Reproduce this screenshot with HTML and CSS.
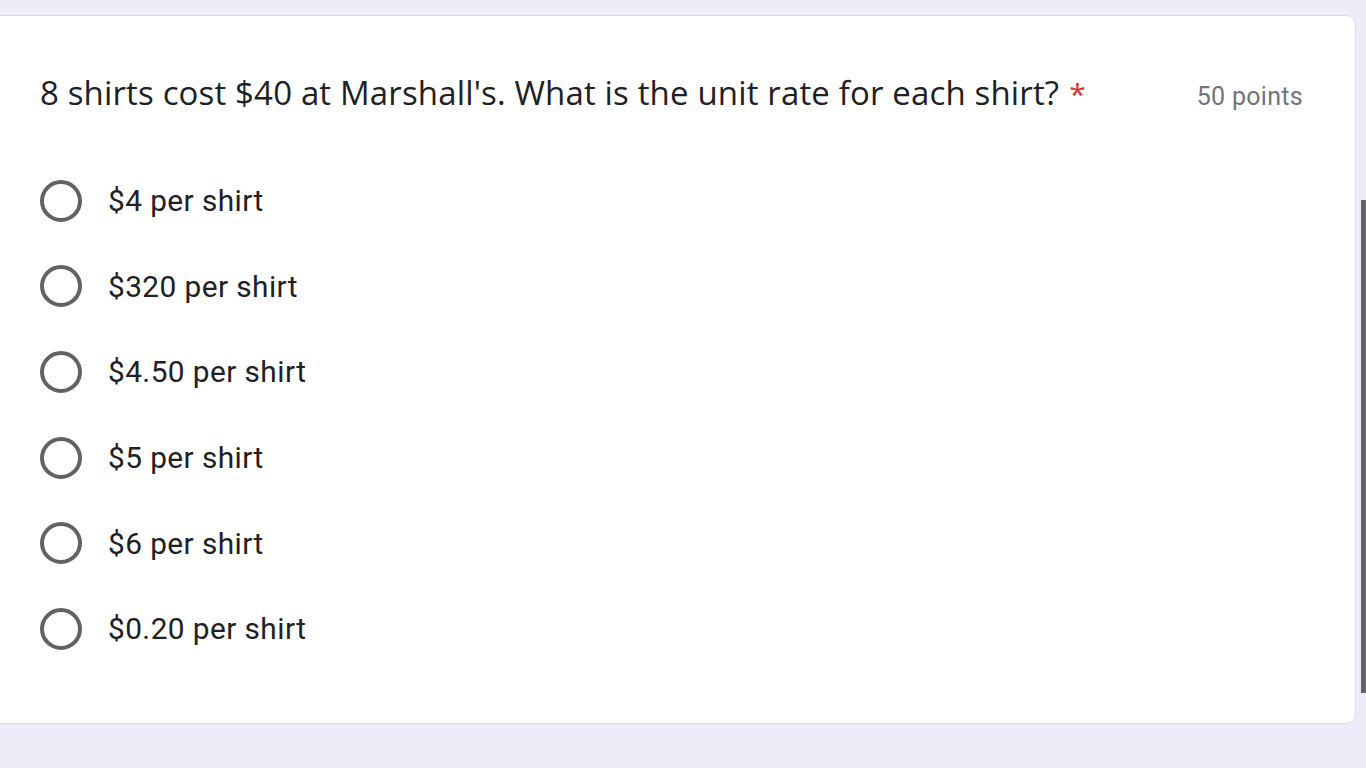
FILE: index.html
```html
<!DOCTYPE html>
<html>
<head>
<meta charset="utf-8">
<link rel="stylesheet" href="styles.css">
</head>
<body>
<div class="page">
  <div class="card">
    <div class="head">
      <div class="question">8 shirts cost $40 at Marshall's. What is the unit rate for each shirt?<span class="req">*</span></div>
      <div class="points">50 points</div>
    </div>
    <div class="options">
      <div class="option"><span class="radio"></span><span class="label">$4 per shirt</span></div>
      <div class="option"><span class="radio"></span><span class="label">$320 per shirt</span></div>
      <div class="option"><span class="radio"></span><span class="label">$4.50 per shirt</span></div>
      <div class="option"><span class="radio"></span><span class="label">$5 per shirt</span></div>
      <div class="option"><span class="radio"></span><span class="label">$6 per shirt</span></div>
      <div class="option"><span class="radio"></span><span class="label">$0.20 per shirt</span></div>
    </div>
  </div>
</div>
<div class="scrollbar"></div>
</body>
</html>
```
FILE: styles.css
```css
html, body {
  margin: 0;
  padding: 0;
  background: #f0ebf8;
  height: 768px;
  overflow: hidden;
}
.page {
  padding-top: 15px;
}
.card {
  margin: 0 10px 0 -10px;
  height: 709px;
  background: #ffffff;
  border: 1px solid #dadce0;
  border-radius: 10px;
  padding: 0 52px 0 49px;
  box-sizing: border-box;
}
.head {
  display: flex;
  justify-content: space-between;
  align-items: baseline;
  padding-top: 55px;
}
.question {
  font-family: "Open Sans", "Noto Sans", sans-serif;
  font-size: 33px;
  letter-spacing: 0.15px;
  color: #202124;
  line-height: 44px;
}
.req {
  color: #d93025;
  margin-left: 10px;
  font-size: 30px;
}
.points {
  font-family: Roboto, "Liberation Sans", sans-serif;
  font-size: 25px;
  letter-spacing: 0.3px;
  color: #70757a;
}
.options {
  padding-top: 42px;
}
.option {
  display: flex;
  align-items: center;
  height: 85.6px;
}
.radio {
  width: 42px;
  height: 42px;
  box-sizing: border-box;
  border: 4px solid #5f6368;
  border-radius: 50%;
  flex: none;
}
.label {
  margin-left: 26px;
  font-family: Roboto, "Liberation Sans", sans-serif;
  font-size: 29.8px;
  letter-spacing: 0.43px;
  color: #202124;
}
.scrollbar {
  position: absolute;
  right: 0;
  top: 200px;
  width: 5px;
  height: 493px;
  background: #5f6368;
}
```
